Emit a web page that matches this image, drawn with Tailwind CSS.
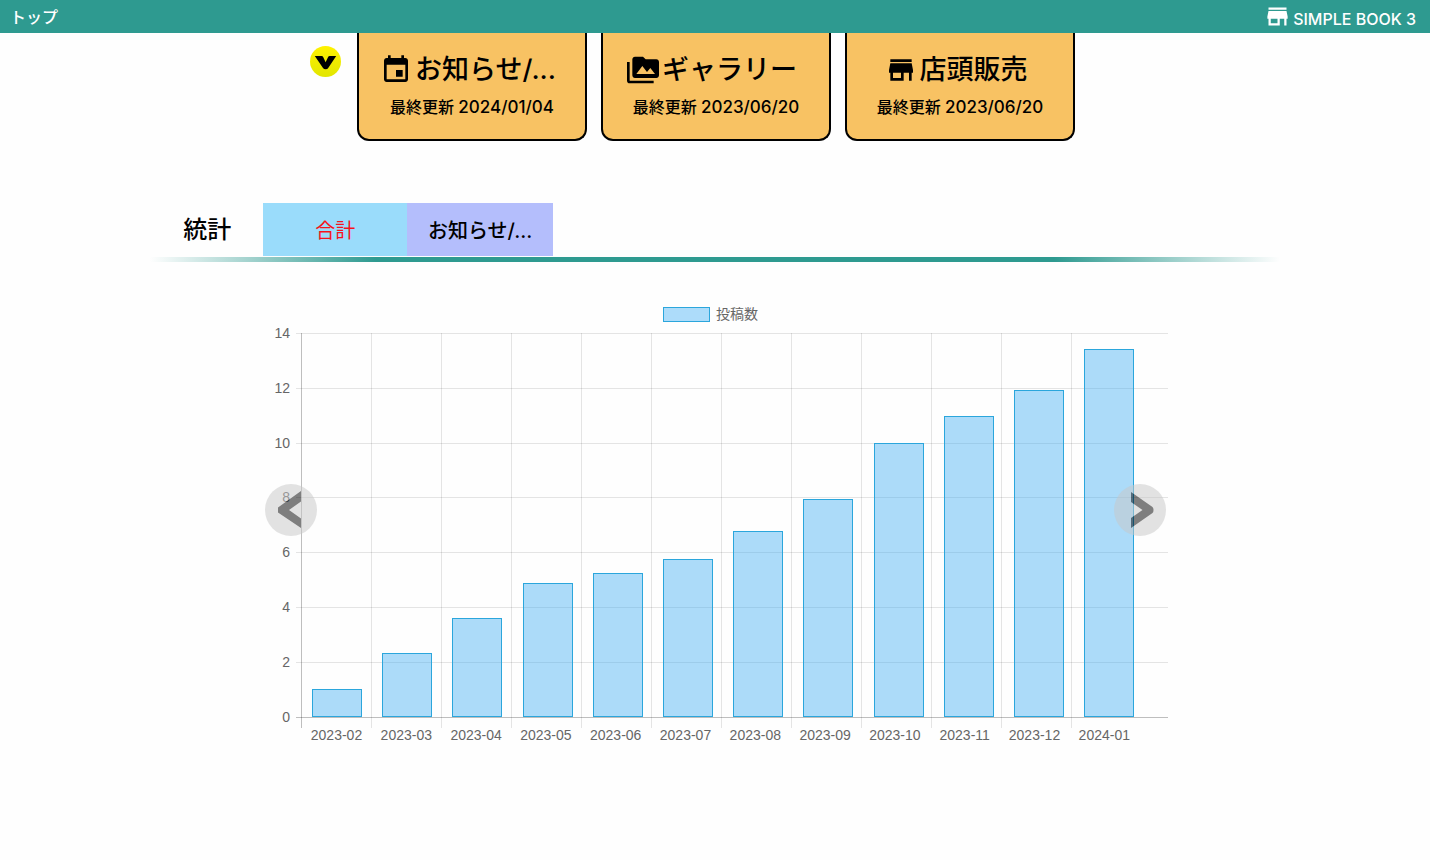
<!DOCTYPE html>
<html lang="ja">
<head>
<meta charset="utf-8">
<meta name="viewport" content="width=device-width, initial-scale=1">
<title>SIMPLE BOOK 3</title>
<script src="https://cdn.jsdelivr.net/npm/@tailwindcss/browser@4"></script>
</head>
<body class="bg-[#fefefe] text-black font-medium font-['Inter','Noto_Sans_CJK_JP',sans-serif]">
<header class="sticky top-0 z-10 flex h-[33px] items-center justify-between bg-[#2e9a90] pr-[14px] pl-[10px] text-base leading-6 text-white">
  <a href="#">トップ</a>
  <a href="#" class="flex items-center gap-[2px]">
    <svg class="size-[27px]" viewBox="0 0 24 24" fill="currentColor" aria-hidden="true"><path d="M20 4H4v2h16V4zm1 10v-2l-1-5H4l-1 5v2h1v6h10v-6h4v6h2v-6h1zm-9 4H6v-4h6v4z"/></svg>
    <span class="pt-1">SIMPLE BOOK 3</span>
  </a>
</header>

<main>
  <section class="flex justify-center gap-4 pr-[45px]" aria-label="コンテンツ">
    <button type="button" aria-label="開閉" class="mt-[13px] size-[31px] shrink-0 rounded-full bg-linear-to-b from-[#fff200] to-[#e2e600]">
      <svg viewBox="0 0 31 31" aria-hidden="true"><path d="M4.800 10H11.500Q12.800 10 13.300 11.200L15.600 16.200L18 11.200Q18.500 10 19.800 10H26.200L18.200 22Q17.500 23.200 15.600 23.200Q13.800 23.200 13 22Z"/></svg>
    </button>
    <div class="flex gap-[14px]">
      <a href="#" class="flex h-[108px] w-[230px] flex-col items-center rounded-b-xl border-2 border-t-0 border-black bg-[#f8c263] pt-[17px]">
        <span class="flex items-center gap-[3px] pr-2 text-[27px] leading-10">
          <svg class="size-8" viewBox="0 0 24 24" aria-hidden="true"><path d="M17 12h-5v5h5v-5zM16 1v2H8V1H6v2H5c-1.110 0-1.990.9-1.990 2L3 19c0 1.100.89 2 2 2h14c1.100 0 2-.9 2-2V5c0-1.100-.9-2-2-2h-1V1h-2zm3 18H5V8h14v11z"/></svg>
          お知らせ/...
        </span>
        <span class="pt-[5px] text-base leading-6">最終更新 <span class="text-[17px]">2024/01/04</span></span>
      </a>
      <a href="#" class="flex h-[108px] w-[230px] flex-col items-center rounded-b-xl border-2 border-t-0 border-black bg-[#f8c263] pt-[17px]">
        <span class="flex items-center gap-[3px] pr-2 text-[27px] leading-10">
          <svg class="size-8" viewBox="0 0 24 24" aria-hidden="true"><path d="M2 6H0v5h.01L0 20c0 1.100.9 2 2 2h18v-2H2V6zm20-2h-8l-2-2H6c-1.100 0-1.990.9-1.990 2L4 16c0 1.100.9 2 2 2h16c1.100 0 2-.9 2-2V6c0-1.100-.9-2-2-2zM7 15l4.500-6 3.500 4.510 2.500-3.010L21 15H7z"/></svg>
          ギャラリー
        </span>
        <span class="pt-[5px] text-base leading-6">最終更新 <span class="text-[17px]">2023/06/20</span></span>
      </a>
      <a href="#" class="flex h-[108px] w-[230px] flex-col items-center rounded-b-xl border-2 border-t-0 border-black bg-[#f8c263] pt-[17px]">
        <span class="flex items-center gap-[3px] pr-2 text-[27px] leading-10">
          <svg class="size-8" viewBox="0 0 24 24" aria-hidden="true"><path d="M20 4H4v2h16V4zm1 10v-2l-1-5H4l-1 5v2h1v6h10v-6h4v6h2v-6h1zm-9 4H6v-4h6v4z"/></svg>
          店頭販売
        </span>
        <span class="pt-[5px] text-base leading-6">最終更新 <span class="text-[17px]">2023/06/20</span></span>
      </a>
    </div>
  </section>

  <section class="mx-auto mt-[62px] w-[79%]">
    <div class="flex items-center pl-[33px]">
      <h2 class="w-20 text-2xl">統計</h2>
      <button type="button" class="h-[53px] w-36 bg-[#9adcfb] pt-0.5 text-xl font-normal text-[#f5141c]">合計</button>
      <button type="button" class="h-[53px] w-[146px] bg-[#b4befc] pt-0.5 text-xl">お知らせ/...</button>
    </div>
    <div class="mt-px h-[5px] bg-[linear-gradient(to_right,transparent,#2e9a90_20%,#2e9a90_80%,transparent)]"></div>
  </section>

  <section class="relative mx-auto mt-[38px] w-[906px] max-w-full" aria-label="投稿数">
    <svg id="chart" class="block w-full font-['Liberation_Sans','Noto_Sans_CJK_JP',sans-serif] text-sm font-normal" viewBox="0 0 906 450" role="img" aria-label="投稿数の棒グラフ">
      <rect x="401.500" y="7.500" width="46" height="14" class="fill-[#addcfa] stroke-[#2ba6dc]"/>
      <text x="454" y="19" class="fill-[#666]">投稿数</text>
    </svg>
    <button type="button" aria-label="前へ" class="absolute top-[184px] left-[3px] size-[52px] rounded-full bg-[#c8c8c8] opacity-50">
      <svg viewBox="0 0 52 52" aria-hidden="true"><path d="M36 7V17.500L24 26L36 34.500V44L13 28.500V23.500Z"/></svg>
    </button>
    <button type="button" aria-label="次へ" class="absolute top-[184px] right-[2px] size-[52px] rounded-full bg-[#c8c8c8] opacity-50">
      <svg viewBox="0 0 52 52" aria-hidden="true"><path d="M17 8V18L28.500 26L17 34V44L38.500 29Q39.500 28.500 39.500 26Q39.500 24 38.500 23Z"/></svg>
    </button>
  </section>
</main>

<script>
  const chart = document.getElementById('chart');
  const add = (name, attrs, text) => {
    const el = document.createElementNS('http://www.w3.org/2000/svg', name);
    for (const key in attrs) el.setAttribute(key, attrs[key]);
    if (text !== undefined) el.textContent = text;
    chart.appendChild(el);
  };
  const data = [
    ['2023-02', 1.03], ['2023-03', 2.32], ['2023-04', 3.6], ['2023-05', 4.88],
    ['2023-06', 5.26], ['2023-07', 5.76], ['2023-08', 6.78], ['2023-09', 7.94],
    ['2023-10', 10], ['2023-11', 10.95], ['2023-12', 11.93], ['2024-01', 13.42]
  ];
  const left = 39.5, base = 417.5, step = 70, unit = 27.45;
  for (let v = 0; v <= 14; v += 2) {
    const y = Math.round(base - v * unit - 0.5) + 0.5;
    add('line', { x1: 34, x2: 907, y1: y, y2: y, class: v ? 'stroke-black/10' : 'stroke-black/25' });
    add('text', { x: 28, y: y + 4, 'text-anchor': 'end', class: 'fill-[#666]' }, v);
  }
  data.forEach(([label], i) => {
    const x = left + i * step;
    add('line', { x1: x, x2: x, y1: 33, y2: 428, class: i ? 'stroke-black/10' : 'stroke-black/25' });
    add('text', { x: left + 35 + i * 69.8, y: 440, 'text-anchor': 'middle', class: 'fill-[#666]' }, label);
  });
  data.forEach(([, value], i) => {
    const top = Math.round(base - value * unit - 0.5) + 0.5;
    add('rect', { x: left + 11 + Math.round(i * 70.2), y: top, width: 49, height: base - 1 - top, class: 'fill-[#32a8f2]/40 stroke-[#2ba6dc]' });
  });
</script>
</body>
</html>
